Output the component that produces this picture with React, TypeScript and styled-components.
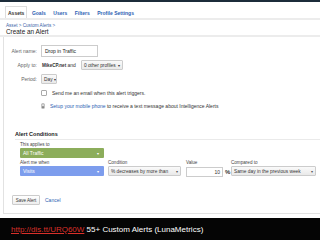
import React from 'react';
import styled, { createGlobalStyle } from 'styled-components';

const GlobalStyle = createGlobalStyle`
  html, body {
    margin: 0;
    padding: 0;
    width: 320px;
    height: 240px;
    overflow: hidden;
    background: #fff;
    font-family: "Liberation Sans", Arial, sans-serif;
  }
`;

const tabs = ['Assets', 'Goals', 'Users', 'Filters', 'Profile Settings'];

export default function App() {
  return (
    <>
      <GlobalStyle />
      <Page>
        <TopStrip />
        <TabBar>
          {tabs.map((t, i) => (
            <Tab key={t} active={i === 0}>
              {t}
            </Tab>
          ))}
        </TabBar>
        <Header>
          <Crumb>Asset &gt; Custom Alerts &gt;</Crumb>
          <Title>Create an Alert</Title>
        </Header>
        <Panel>
          <FormRow>
            <Label>Alert name:</Label>
            <TextInput>Drop in Traffic</TextInput>
          </FormRow>
          <FormRow>
            <Label>Apply to:</Label>
            <Value>
              <b>MikeCP.net</b> and
            </Value>
            <Select width={42}>
              0 other profiles <Arrow>▾</Arrow>
            </Select>
          </FormRow>
          <FormRow>
            <Label>Period:</Label>
            <Select width={16}>
              Day <Arrow>▾</Arrow>
            </Select>
          </FormRow>
          <FormRow short>
            <Label />
            <Check />
            <Value>Send me an email when this alert triggers.</Value>
          </FormRow>
          <FormRow short>
            <Label />
            <Phone>
              <svg width="4" height="6" viewBox="0 0 4 6">
                <rect x="0.5" y="0.5" width="3" height="5" rx="0.5" fill="#888" />
                <rect x="1" y="1.2" width="2" height="2" fill="#ddd" />
              </svg>
            </Phone>
            <Value>
              <Link>Setup your mobile phone</Link> to receive a text message about Intelligence Alerts
            </Value>
          </FormRow>

          <Conditions>
            <SectionTitle>Alert Conditions</SectionTitle>
            <CondBody>
              <Small>This applies to</Small>
              <ColorSelect color="#8cad5b">
                All Traffic <Arrow>▾</Arrow>
              </ColorSelect>
              <CondGrid>
                <Small>Alert me when</Small>
                <Small>Condition</Small>
                <Small>Value</Small>
                <Small>Compared to</Small>
                <ColorSelect color="#7d9ded">
                  Visits <Arrow>▾</Arrow>
                </ColorSelect>
                <Select width={73}>
                  % decreases by more than <Arrow dark>▾</Arrow>
                </Select>
                <ValueBox>
                  <NumInput>10</NumInput>
                  <b>%</b>
                </ValueBox>
                <Select width={85}>
                  Same day in the previous week <Arrow dark>▾</Arrow>
                </Select>
              </CondGrid>
            </CondBody>
          </Conditions>

          <Actions>
            <Button>Save Alert</Button>
            <Link>Cancel</Link>
          </Actions>
        </Panel>
        <Gap />
        <Footer>
          <FootLink>http://dis.tt/URQ60W</FootLink> 55+ Custom Alerts (LunaMetrics)
        </Footer>
      </Page>
    </>
  );
}

const Page = styled.div`
  width: 320px;
  height: 240px;
  display: flex;
  flex-direction: column;
`;

const TopStrip = styled.div`
  height: 2px;
  background: #1c2c3a;
`;

const TabBar = styled.div`
  height: 16px;
  display: flex;
  align-items: flex-end;
  padding-left: 5px;
  gap: 1.5px;
  border-bottom: 2px solid #ececec;
`;

const Tab = styled.div<{ active?: boolean }>`
  height: 11px;
  padding: 0 2px;
  display: flex;
  align-items: center;
  font-size: 5px;
  font-weight: bold;
  color: ${(p) => (p.active ? '#333' : '#2d62b3')};
  background: #fff;
  border: 1px solid ${(p) => (p.active ? '#ddd' : 'transparent')};
  border-bottom: none;
`;

const Header = styled.div`
  height: 12px;
  padding: 3px 6px 0;
  border-bottom: 2px solid #ececec;
`;

const Crumb = styled.div`
  font-size: 4.6px;
  line-height: 5px;
  color: #3a64a8;
`;

const Title = styled.div`
  font-size: 6.4px;
  line-height: 7px;
  color: #222;
`;

const Panel = styled.div`
  flex: 1;
  margin-left: 3px;
  padding-top: 7px;
  border-left: 1px solid #e2e2e2;
  border-bottom: 1px solid #e2e2e2;
  display: flex;
  flex-direction: column;
`;

const FormRow = styled.div<{ short?: boolean }>`
  height: ${(p) => (p.short ? 13.5 : 14)}px;
  display: flex;
  align-items: center;
  gap: 2px;
  font-size: 5px;
  color: #333;
`;

const Label = styled.div`
  width: 33px;
  text-align: right;
  color: #666;
  padding-right: 2px;
  flex-shrink: 0;
`;

const TextInput = styled.div`
  width: 52px;
  height: 10px;
  border: 1px solid #ccc;
  padding-left: 3px;
  display: flex;
  align-items: center;
  font-size: 5px;
  color: #222;
`;

const Value = styled.div`
  white-space: nowrap;
  color: #333;
  margin-left: 1px;
  margin-right: 3px;

  b {
    font-size: 4.6px;
  }
`;

const Select = styled.div<{ width: number }>`
  width: ${(p) => p.width}px;
  height: 10px;
  box-sizing: border-box;
  border: 1px solid #ccc;
  border-radius: 1px;
  background: linear-gradient(#fafafa, #e9e9e9);
  padding: 0 2px;
  display: flex;
  align-items: center;
  justify-content: space-between;
  font-size: 4.8px;
  color: #333;
  white-space: nowrap;
  overflow: hidden;
`;

const Arrow = styled.span<{ dark?: boolean }>`
  font-size: 4px;
  color: ${(p) => (p.dark ? '#555' : 'inherit')};
  margin-left: 1px;
`;

const Check = styled.div`
  width: 4px;
  height: 4px;
  border: 1px solid #aaa;
  border-radius: 1px;
  margin-right: 2px;
`;

const Phone = styled.div`
  width: 6px;
  display: flex;
`;

const Link = styled.span`
  color: #2d62b3;
`;

const Conditions = styled.div`
  margin-top: 18px;
  padding-left: 11px;
`;

const SectionTitle = styled.div`
  font-size: 5.5px;
  font-weight: bold;
  color: #222;
  padding-bottom: 2px;
  border-bottom: 1px solid #eaeaea;
`;

const CondBody = styled.div`
  padding-left: 5px;
  padding-top: 2px;
  display: flex;
  flex-direction: column;
`;

const Small = styled.div`
  font-size: 4.6px;
  line-height: 6px;
  color: #444;
`;

const ColorSelect = styled.div<{ color: string }>`
  width: 84px;
  height: 10px;
  box-sizing: border-box;
  background: ${(p) => p.color};
  border-radius: 1px;
  padding: 0 5px 0 3px;
  display: flex;
  align-items: center;
  justify-content: space-between;
  color: #fff;
  font-size: 5px;
  margin-bottom: 1px;
`;

const CondGrid = styled.div`
  display: grid;
  grid-template-columns: 88px 78px 45px 85px;
  margin-top: 1px;
`;

const ValueBox = styled.div`
  display: flex;
  align-items: center;
  gap: 2px;
  font-size: 6px;
  color: #333;
`;

const NumInput = styled.div`
  width: 37px;
  height: 10px;
  box-sizing: border-box;
  border: 1px solid #ccc;
  padding-right: 2px;
  display: flex;
  align-items: center;
  justify-content: flex-end;
  font-size: 5px;
  color: #333;
`;

const Actions = styled.div`
  margin-top: 18px;
  padding-left: 8px;
  display: flex;
  align-items: center;
  gap: 5px;
  font-size: 5px;
`;

const Button = styled.div`
  width: 28px;
  height: 10px;
  box-sizing: border-box;
  border: 1px solid #ccc;
  border-radius: 1px;
  background: linear-gradient(#fff, #eee);
  display: flex;
  align-items: center;
  justify-content: center;
  font-size: 4.5px;
  color: #333;
`;

const Gap = styled.div`
  height: 4px;
`;

const Footer = styled.div`
  height: 22px;
  background: #050505;
  color: #fff;
  font-size: 8px;
  font-weight: normal;
  padding-left: 11px;
  display: flex;
  align-items: center;
  white-space: pre;
`;

const FootLink = styled.span`
  color: #d9302a;
  text-decoration: underline;
`;
